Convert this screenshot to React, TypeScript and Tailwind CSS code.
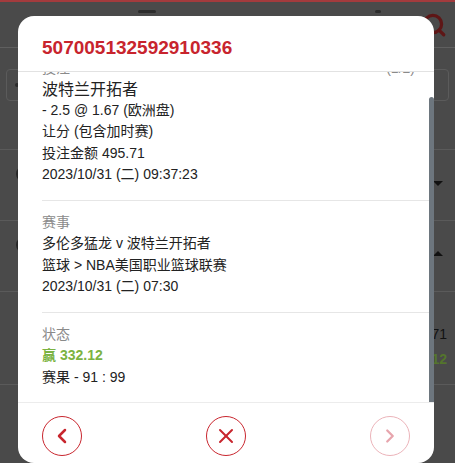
import { ChevronLeft, ChevronRight, Search, X } from "lucide-react"

type Line = { text: string; className?: string }

type Section = {
    label: string
    aside?: string
    lines: Line[]
}

const sections: Section[] = [
    {
        label: "投注",
        aside: "(1/2)",
        lines: [
            { text: "波特兰开拓者", className: "text-[16px] leading-[20px]" },
            { text: "- 2.5 @ 1.67 (欧洲盘)" },
            { text: "让分 (包含加时赛)" },
            { text: "投注金额 495.71" },
            { text: "2023/10/31 (二) 09:37:23" },
        ],
    },
    {
        label: "赛事",
        lines: [
            { text: "多伦多猛龙 v 波特兰开拓者" },
            { text: "篮球 > NBA美国职业篮球联赛" },
            { text: "2023/10/31 (二) 07:30" },
        ],
    },
    {
        label: "状态",
        lines: [
            { text: "赢 332.12", className: "font-bold text-[#7cb342]" },
            { text: "赛果 - 91 : 99" },
        ],
    },
]

function BackgroundPage() {
    return (
        <div className="flex h-full flex-col">
            <div className="h-[2px] bg-[#a33b3d]" />
            <header className="flex h-[46px] items-center justify-between border-b border-[#5f5f5f] pl-[138px] pr-[8px]">
                <div className="mb-[26px] h-[3px] w-[18px] rounded-sm bg-[#2c2c2c]" />
                <div className="flex items-center gap-[40px]">
                    <div className="mb-[26px] h-[3px] w-[6px] rounded-sm bg-[#2c2c2c]" />
                    <Search size={26} strokeWidth={3} className="text-[#5e1616]" />
                </div>
            </header>
            <div className="px-[6px] pt-[21px]">
                <div className="flex h-[32px] items-center rounded border border-[#5b5b5b] pl-[8px]">
                    <div className="size-[4px] rounded-full bg-[#2a2a2a]" />
                </div>
            </div>
            <div className="mt-[48px] border-t border-[#5a5a5a]">
                <div className="flex h-[71px] items-center justify-between border-b border-[#5a5a5a] pl-[16px] pr-[12px]">
                    <div className="mt-[-22px] size-[18px] rounded-full border-2 border-[#262626]" />
                    <div className="mt-[-4px] h-0 w-0 border-x-[5px] border-t-[5px] border-x-transparent border-t-[#111]" />
                </div>
                <div className="flex h-[71px] items-center justify-between border-b border-[#5a5a5a] pl-[16px] pr-[12px]">
                    <div className="mt-[-22px] size-[18px] rounded-full border-2 border-[#262626]" />
                    <div className="mt-[-6px] h-0 w-0 border-x-[5px] border-b-[5px] border-x-transparent border-b-[#111]" />
                </div>
                <div className="flex h-[93px] flex-col items-end gap-[4px] border-b border-[#5a5a5a] pr-[8px] pt-[32px] text-[14px] leading-[21px]">
                    <span className="text-[#111]">71</span>
                    <span className="font-bold text-[#54752c]">12</span>
                </div>
            </div>
        </div>
    )
}

function RoundButton({ children, disabled }: { children: React.ReactNode; disabled?: boolean }) {
    return (
        <button
            className={
                disabled
                    ? "flex size-[40px] items-center justify-center rounded-full border border-[#ebb3b9] text-[#e7a5ad]"
                    : "flex size-[40px] items-center justify-center rounded-full border border-[#c8262e] text-[#c8262e]"
            }
        >
            {children}
        </button>
    )
}

export default function App() {
    return (
        <div className="relative h-[463px] w-[455px] overflow-hidden bg-[#4a4a4a] font-['Liberation_Sans','Noto_Sans_CJK_SC',sans-serif]">
            <BackgroundPage />

            <div className="absolute left-[18px] top-[16px] flex h-[447px] w-[416px] flex-col overflow-hidden rounded-2xl bg-white">
                <div className="h-[56px] border-b border-[#e2e2e2] pl-[24px] pt-[20px]">
                    <h2 className="text-[19px] font-bold leading-[24px] text-[#c8242d]">507005132592910336</h2>
                </div>

                <div className="relative flex h-[330px] flex-col justify-end overflow-hidden">
                    <div className="ml-[24px] mr-[4px]">
                        {sections.map((section, index) => (
                            <section
                                key={section.label}
                                className={
                                    index < sections.length - 1
                                        ? "border-b border-[#e6e6e6] pb-[14px] pr-[15px] pt-[11px] text-[14px] leading-[21.5px] text-[#222]"
                                        : "pb-[14px] pr-[15px] pt-[11px] text-[14px] leading-[21.5px] text-[#222]"
                                }
                            >
                                <div className="flex justify-between text-[#8a8a8a]">
                                    <span>{section.label}</span>
                                    {section.aside && <span>{section.aside}</span>}
                                </div>
                                {section.lines.map((line) => (
                                    <div key={line.text} className={line.className}>
                                        {line.text}
                                    </div>
                                ))}
                            </section>
                        ))}
                    </div>
                    <div className="absolute bottom-0 right-0 top-[25px] w-[5px] rounded-t-sm bg-[#6d767e]" />
                </div>

                <footer className="flex flex-1 items-start justify-between border-t border-[#ececec] px-[24px] pt-[13px]">
                    <RoundButton>
                        <ChevronLeft size={24} strokeWidth={2.5} />
                    </RoundButton>
                    <RoundButton>
                        <X size={24} strokeWidth={2} />
                    </RoundButton>
                    <RoundButton disabled>
                        <ChevronRight size={22} strokeWidth={2.5} />
                    </RoundButton>
                </footer>
            </div>
        </div>
    )
}
